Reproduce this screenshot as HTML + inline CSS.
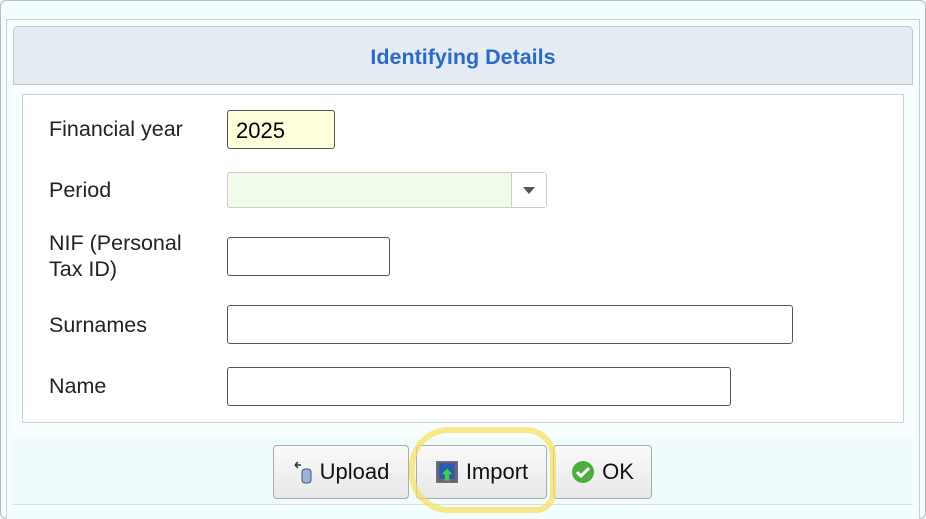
<!DOCTYPE html>
<html><head><style>
body{margin:0;width:926px;height:519px;background:#f2fefe;font-family:"Liberation Sans",sans-serif;position:relative;overflow:hidden}
.a{position:absolute;box-sizing:border-box}
.lbl{position:absolute;font-size:21.5px;color:#222;left:49px}
.in{position:absolute;box-sizing:border-box;border:1px solid #555;border-radius:3px;background:#fff}
.btn{position:absolute;box-sizing:border-box;top:445px;height:54px;border:1px solid #aaa;border-radius:4px;background:linear-gradient(#fafafa,#e8e8e8);font-size:22px;color:#111;display:flex;align-items:center;justify-content:center;gap:7px}
</style></head><body>
<div class="a" style="left:0;top:0;width:926px;height:519px;border:1px solid #bbb;border-radius:6px"></div>
<div class="a" style="left:6px;top:19px;width:914px;height:500px;border:1px solid #ccc;border-bottom:none;background:#f2fefe"></div>
<div class="a" style="left:13px;top:26px;width:900px;height:59px;background:#e4ebf3;border:1px solid #c0c8d0;border-radius:5px 5px 0 0;text-align:center;line-height:60px;color:#2a6acb;font-weight:bold;font-size:21.5px">Identifying Details</div>
<div class="a" style="left:13px;top:85px;width:900px;height:352px;background:#f8fefe"></div>
<div class="a" style="left:22px;top:94px;width:882px;height:329px;background:#fff;border:1px solid #ccd"></div>
<div class="lbl" style="top:117px">Financial year</div>
<div class="in" style="left:227px;top:110px;width:108px;height:39px;background:#ffffdc;font-size:22px;padding:7px 0 0 8px;color:#000">2025</div>
<div class="lbl" style="top:178px">Period</div>
<div class="in" style="left:227px;top:172px;width:320px;height:36px;border-color:#ccc;background:#f1fbea"></div>
<div class="a" style="left:511px;top:173px;width:35px;height:34px;background:#fff;border-left:1px solid #ccc"></div>
<div class="a" style="left:523px;top:187px;width:0;height:0;border-left:6px solid transparent;border-right:6px solid transparent;border-top:7px solid #555"></div>
<div class="lbl" style="top:230px;line-height:26px">NIF (Personal<br>Tax ID)</div>
<div class="in" style="left:227px;top:237px;width:163px;height:39px"></div>
<div class="lbl" style="top:313px">Surnames</div>
<div class="in" style="left:227px;top:305px;width:566px;height:39px"></div>
<div class="lbl" style="top:374px">Name</div>
<div class="in" style="left:227px;top:367px;width:504px;height:39px"></div>
<div class="a" style="left:13px;top:437px;width:900px;height:68px;background:#f0fcfc;border-bottom:1px solid #ddd"></div>
<div class="btn" style="left:273px;width:136px"><svg width="20" height="24" viewBox="0 0 20 24"><path d="M2 5h6M2 5l3-3M2 5l3 3" stroke="#333" stroke-width="1.5" fill="none"/><rect x="9" y="9" width="9" height="14" rx="3" fill="#9ab4d8" stroke="#456"/></svg>Upload</div>
<div class="btn" style="left:416px;width:131px"><svg width="24" height="24" viewBox="0 0 22 22"><rect x="1" y="1" width="20" height="20" fill="#667"/><rect x="4" y="3" width="14" height="14" fill="#2a5ab0"/><path d="M11 8l-5 5h3v6h4v-6h3z" fill="#4c4"/></svg>Import</div>
<div class="btn" style="left:553px;width:99px"><svg width="24" height="24"><circle cx="12" cy="12" r="11" fill="#4cae3c"/><path d="M6 12l4 4 8-8" stroke="#fff" stroke-width="3" fill="none"/></svg>OK</div>
<div class="a" style="left:409px;top:427px;width:147px;height:86px;border:6px solid rgba(246,222,90,0.7);border-radius:40px 30px 20px 40px"></div>
</body></html>
